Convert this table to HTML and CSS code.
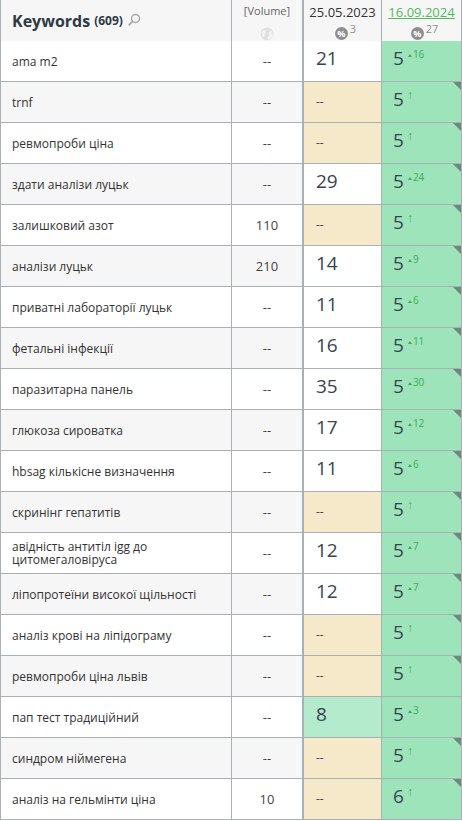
FILE: index.html
```html
<!DOCTYPE html>
<html lang="uk">
<head>
    <meta charset="UTF-8">
    <meta name="viewport" content="width=device-width, initial-scale=1.0">
    <title>Keywords</title>
    <link rel="stylesheet" href="styles.css">
</head>
<body>
    <div class="grid">
        <div class="cell head kw-head">
            <span class="kw-title">Keywords</span>
            <span class="kw-count">(609)</span>
            <svg class="search" width="13" height="13" viewBox="0 0 13 13">
                <circle cx="7.5" cy="5.5" r="4" fill="none" stroke="#a7a7a7" stroke-width="1.5"/>
                <line x1="4.6" y1="8.4" x2="1.2" y2="11.8" stroke="#a7a7a7" stroke-width="1.7" stroke-linecap="round"/>
            </svg>
        </div>
        <div class="cell head vol vol-head">
            <span class="vol-title">[Volume]</span>
            <svg class="globe" width="14" height="14" viewBox="0 0 14 14">
                <circle cx="7" cy="7" r="6.5" fill="#e0e0e0"/>
                <path d="M3 3.5 C4.5 3 6 3.6 6 5 C6 6.2 4.6 6.3 4.8 7.6 C5 9 3.6 9.5 3 10.5 C1.8 9 1.4 6.2 3 3.5 Z" fill="#f4f4f4"/>
                <path d="M8 1.2 C9.6 1.6 11 2.6 11.8 4 C10.6 4.4 9.6 4 9 5 C8.4 6 9.8 6.8 9.4 8.2 C9 9.4 7.8 9 7.6 10.6 C7.4 11.8 8.6 12.6 8.4 13 C10.6 12.4 12.8 10.4 13 7.6 C12.2 7 11.6 7.4 11 6.6 C10.6 6 11.6 5.4 12.2 5 C11.4 2.8 9.8 1.6 8 1.2 Z" fill="#f4f4f4"/>
            </svg>
        </div>
        <div class="cell head date-head">
            <span class="date">25.05.2023</span>
            <span class="badge-line"><span class="pct">%</span><span class="cnt">3</span></span>
        </div>
        <div class="cell head date-head">
            <span class="date current">16.09.2024</span>
            <span class="badge-line"><span class="pct">%</span><span class="cnt">27</span></span>
        </div>

        <div class="cell kw">ama m2</div>
        <div class="cell vol">--</div>
        <div class="cell pos">21</div>
        <div class="cell now">5<span class="up">16</span></div>

        <div class="cell kw alt">trnf</div>
        <div class="cell vol alt">--</div>
        <div class="cell pos none">--</div>
        <div class="cell now mark">5<span class="new">&#8593;</span></div>

        <div class="cell kw">ревмопроби ціна</div>
        <div class="cell vol">--</div>
        <div class="cell pos none">--</div>
        <div class="cell now mark">5<span class="new">&#8593;</span></div>

        <div class="cell kw alt">здати аналізи луцьк</div>
        <div class="cell vol alt">--</div>
        <div class="cell pos">29</div>
        <div class="cell now mark">5<span class="up">24</span></div>

        <div class="cell kw">залишковий азот</div>
        <div class="cell vol">110</div>
        <div class="cell pos none">--</div>
        <div class="cell now mark">5<span class="new">&#8593;</span></div>

        <div class="cell kw alt">аналізи луцьк</div>
        <div class="cell vol alt">210</div>
        <div class="cell pos">14</div>
        <div class="cell now mark">5<span class="up">9</span></div>

        <div class="cell kw">приватні лабораторії луцьк</div>
        <div class="cell vol">--</div>
        <div class="cell pos">11</div>
        <div class="cell now mark">5<span class="up">6</span></div>

        <div class="cell kw alt">фетальні інфекції</div>
        <div class="cell vol alt">--</div>
        <div class="cell pos">16</div>
        <div class="cell now mark">5<span class="up">11</span></div>

        <div class="cell kw">паразитарна панель</div>
        <div class="cell vol">--</div>
        <div class="cell pos">35</div>
        <div class="cell now mark">5<span class="up">30</span></div>

        <div class="cell kw alt">глюкоза сироватка</div>
        <div class="cell vol alt">--</div>
        <div class="cell pos">17</div>
        <div class="cell now mark">5<span class="up">12</span></div>

        <div class="cell kw">hbsag кількісне визначення</div>
        <div class="cell vol">--</div>
        <div class="cell pos">11</div>
        <div class="cell now mark">5<span class="up">6</span></div>

        <div class="cell kw alt">скринінг гепатитів</div>
        <div class="cell vol alt">--</div>
        <div class="cell pos none">--</div>
        <div class="cell now mark">5<span class="new">&#8593;</span></div>

        <div class="cell kw">авідність антитіл igg до цитомегаловіруса</div>
        <div class="cell vol">--</div>
        <div class="cell pos">12</div>
        <div class="cell now mark">5<span class="up">7</span></div>

        <div class="cell kw alt">ліпопротеїни високої щільності</div>
        <div class="cell vol alt">--</div>
        <div class="cell pos">12</div>
        <div class="cell now mark">5<span class="up">7</span></div>

        <div class="cell kw">аналіз крові на ліпідограму</div>
        <div class="cell vol">--</div>
        <div class="cell pos none">--</div>
        <div class="cell now mark">5<span class="new">&#8593;</span></div>

        <div class="cell kw alt">ревмопроби ціна львів</div>
        <div class="cell vol alt">--</div>
        <div class="cell pos none">--</div>
        <div class="cell now mark">5<span class="new">&#8593;</span></div>

        <div class="cell kw">пап тест традиційний</div>
        <div class="cell vol">--</div>
        <div class="cell pos top">8</div>
        <div class="cell now">5<span class="up">3</span></div>

        <div class="cell kw alt">синдром ніймегена</div>
        <div class="cell vol alt">--</div>
        <div class="cell pos none">--</div>
        <div class="cell now mark">5<span class="new">&#8593;</span></div>

        <div class="cell kw">аналіз на гельмінти ціна</div>
        <div class="cell vol">10</div>
        <div class="cell pos none">--</div>
        <div class="cell now mark">6<span class="new">&#8593;</span></div>
    </div>
</body>
</html>
```

FILE: styles.css
```css
body {
    margin: 0;
    padding: 0;
    font-family: "Open Sans", Arial, sans-serif;
    color: #333;
    background: #fff;
}
.grid {
    display: grid;
    grid-template-columns: 231px 72px 78px 80px;
    grid-auto-rows: 41px;
    width: 462px;
    border-left: 1px solid #a9b0b6;
    box-sizing: border-box;
}
.cell {
    box-sizing: border-box;
    border-right: 1px solid #a9b0b6;
    border-bottom: 1px solid #a9b0b6;
    background: #fff;
    position: relative;
}
.cell.alt {
    background: #f6f6f6;
}
.head {
    height: 42px;
    background: #f6f6f6;
}
.grid > .head {
    grid-row: 1;
}
.kw-head {
    display: flex;
    align-items: center;
    padding-left: 11px;
}
.kw-title {
    font-size: 16px;
    font-weight: bold;
    color: #2f3a45;
}
.kw-count {
    font-size: 12px;
    font-weight: bold;
    color: #2f3a45;
    margin-left: 4px;
}
.search {
    margin-left: 5px;
    margin-top: -2px;
}
.vol-head {
    display: flex;
    flex-direction: column;
    align-items: center;
    padding-top: 3px;
}
.vol-title {
    font-size: 11px;
    color: #666;
    line-height: 15px;
}
.globe {
    margin-top: 9px;
}
.date-head {
    display: flex;
    flex-direction: column;
    align-items: center;
    padding-top: 4px;
}
.date {
    font-size: 13px;
    line-height: 16px;
    color: #333;
}
.date.current {
    color: #4fbb59;
    text-decoration: underline;
}
.badge-line {
    display: flex;
    align-items: flex-start;
    margin-top: 7px;
    margin-left: 6px;
}
.pct {
    width: 13px;
    height: 13px;
    border-radius: 50%;
    background: #8f8f8f;
    color: #fff;
    font-size: 9px;
    font-weight: bold;
    line-height: 13px;
    text-align: center;
}
.cnt {
    font-size: 11px;
    color: #8f8f8f;
    line-height: 11px;
    margin-left: 2px;
    margin-top: -4px;
}
.kw {
    display: flex;
    align-items: center;
    padding-left: 11px;
    padding-right: 8px;
    font-size: 12px;
    line-height: 13px;
}
.vol {
    border-right-width: 2px;
    display: flex;
    align-items: center;
    justify-content: center;
    font-size: 13px;
    color: #444;
}
.pos {
    padding: 6px 0 0 12px;
    font-size: 19px;
    line-height: 22px;
    color: #3a4450;
}
.pos.none {
    background: #f5e9c9;
    font-size: 12px;
    padding-top: 9px;
}
.pos.top {
    background: #b3ebcc;
}
.now {
    background: #9de4bb;
    padding: 6px 0 0 11px;
    font-size: 19px;
    line-height: 22px;
    color: #3a4450;
}
.up {
    font-size: 10px;
    color: #3cae55;
    vertical-align: top;
    margin-left: 4px;
    position: relative;
    top: -4px;
}
.up::before {
    content: "";
    display: inline-block;
    border-left: 2px solid transparent;
    border-right: 2px solid transparent;
    border-bottom: 3px solid #3cae55;
    margin-right: 1px;
    vertical-align: 1px;
}
.new {
    font-size: 12px;
    color: #3cae55;
    vertical-align: top;
    margin-left: 3px;
    position: relative;
    top: -4px;
}
.mark::after {
    content: "";
    position: absolute;
    top: 0;
    right: 0;
    border-top: 8px solid #6b8a7c;
    border-left: 8px solid transparent;
}
```
